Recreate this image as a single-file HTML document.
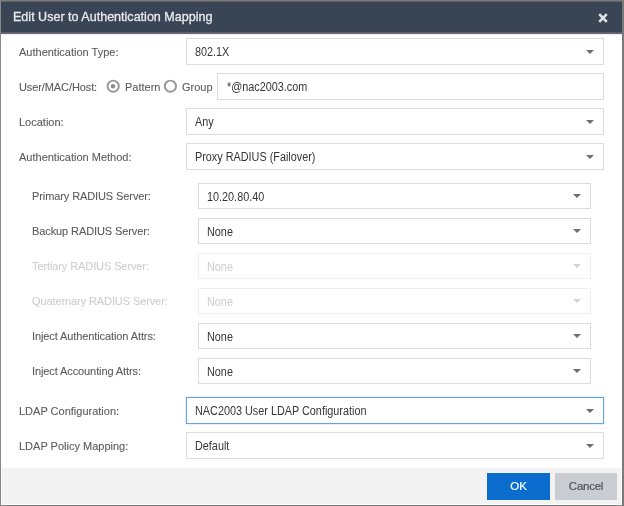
<!DOCTYPE html>
<html><head><meta charset="utf-8">
<style>
*{box-sizing:border-box;margin:0;padding:0}
html,body{width:624px;height:506px;overflow:hidden;background:#fff}
body{font-family:"Liberation Sans",sans-serif;position:relative;-webkit-font-smoothing:antialiased}
.wrap{position:absolute;left:0;top:0;width:624px;height:506px;will-change:transform}
.dlg{position:absolute;left:0;top:0;width:624px;height:506px;border-left:1px solid #888;border-top:1px solid #7a7a7a;border-right:2px solid #7a7a7a;border-bottom:1px solid #7f7f7f;background:#fff}
.hdr{position:absolute;left:0;top:0;width:621px;height:31px;background:#394555;border-bottom:0}
.hline{position:absolute;left:0;top:31px;width:621px;height:2px;background:#6b6f75}
.title{position:absolute;left:13px;top:8px;font-size:13px;transform-origin:0 0;transform:scaleX(0.965);-webkit-text-stroke:0.3px #e8eaee;color:#e8eaee;white-space:nowrap}
.close{position:absolute;left:598px;top:13px;width:10px;height:10px}
.lbl{position:absolute;font-size:11px;color:#5c5c5c;-webkit-text-stroke:0.1px #5c5c5c;white-space:nowrap}
.lbl.dis{color:#cecece;-webkit-text-stroke:0.1px #cecece}
.box{position:absolute;border:1px solid #dcdcdc;background:#fff}
.box .v{position:absolute;left:8px;top:6px;font-size:12px;transform-origin:0 0;transform:scaleX(0.903);color:#363636;white-space:nowrap}
.box.d{border-color:#efefef}
.box.d .v{color:#cdcdcd}
.box.f{border-color:#66a3e4;box-shadow:0 0 1.5px rgba(90,160,230,.55)}
.arr{position:absolute;width:0;height:0;border-left:4px solid transparent;border-right:4px solid transparent;border-top:4px solid #6e6e6e}
.box.d .arr{border-top-color:#d3d3d3}
.radio{position:absolute;width:13px;height:13px;border:2px solid #8a8a8a;border-radius:50%}
.radio.on:after{content:"";position:absolute;left:2.5px;top:2.5px;width:4px;height:4px;background:#8a8a8a;border-radius:50%}
.footer{position:absolute;left:2px;top:468px;width:619px;height:36px;background:#f3f3f3}
.btn{position:absolute;top:473px;height:27px;font-size:11.5px;text-align:center;line-height:27px}
.ok{left:487px;width:63px;background:#0a6dcd;color:#fff;-webkit-text-stroke:0.2px #fff}
.cancel{left:555px;width:62px;background:#c9ccd0;color:#4d535c;letter-spacing:-0.25px;-webkit-text-stroke:0.2px #4d535c}
</style></head><body><div class="wrap">
<div class="dlg">
</div>
<div class="hdr" style="left:1px;top:1px;height:31px;border-top:1px solid #5c616a"></div>
<div class="hline" style="left:1px;top:32px;height:1px;background:#5a606a"></div><div class="hline" style="left:1px;top:33px;height:1px;background:#69696c"></div><div class="hline" style="left:1px;top:34px;height:1px;background:#efefef"></div>
<div class="title" style="top:9.4px">Edit User to Authentication Mapping</div>
<svg class="close" viewBox="0 0 10 10"><path d="M1.2 1.2L8.8 8.8M8.8 1.2L1.2 8.8" stroke="#dfe2e6" stroke-width="2.6" stroke-linecap="butt"/></svg>

<div class="lbl" style="left:19px;top:45.5px">Authentication Type:</div>
<div class="box" style="left:186px;top:38px;width:418px;height:27px"><span class="v">802.1X</span><i class="arr" style="left:399px;top:11px"></i></div>

<div class="lbl" style="left:19px;top:80.5px;letter-spacing:-0.1px">User/MAC/Host:</div>
<svg style="position:absolute;left:104px;top:78px" width="18" height="18"><circle cx="9.2" cy="8.2" r="5.6" fill="none" stroke="#979797" stroke-width="1.9"/><circle cx="9" cy="8.2" r="2.2" fill="#8a8a8a"/></svg>
<div class="lbl" style="left:125px;top:80.5px">Pattern</div>
<svg style="position:absolute;left:162px;top:78px" width="18" height="18"><circle cx="8.4" cy="8.2" r="5.6" fill="none" stroke="#979797" stroke-width="1.9"/></svg>
<div class="lbl" style="left:182px;top:80.5px">Group</div>
<div class="box" style="left:217px;top:73px;width:387px;height:27px"><span class="v" style="left:9px">*@nac2003.com</span></div>

<div class="lbl" style="left:19px;top:115.5px">Location:</div>
<div class="box" style="left:186px;top:108px;width:418px;height:27px"><span class="v">Any</span><i class="arr" style="left:399px;top:11px"></i></div>

<div class="lbl" style="left:19px;top:150.5px">Authentication Method:</div>
<div class="box" style="left:186px;top:143px;width:418px;height:27px"><span class="v">Proxy RADIUS (Failover)</span><i class="arr" style="left:399px;top:11px"></i></div>

<div class="lbl" style="left:32px;letter-spacing:-0.1px;top:190px">Primary RADIUS Server:</div>
<div class="box" style="left:198px;top:183px;width:393px;height:26px"><span class="v">10.20.80.40</span><i class="arr" style="left:374px;top:10px"></i></div>

<div class="lbl" style="left:32px;letter-spacing:-0.1px;top:225px">Backup RADIUS Server:</div>
<div class="box" style="left:198px;top:218px;width:393px;height:26px"><span class="v">None</span><i class="arr" style="left:374px;top:10px"></i></div>

<div class="lbl dis" style="left:32px;letter-spacing:-0.1px;top:260px">Tertiary RADIUS Server:</div>
<div class="box d" style="left:198px;top:253px;width:393px;height:26px"><span class="v">None</span><i class="arr" style="left:374px;top:10px"></i></div>

<div class="lbl dis" style="left:32px;letter-spacing:-0.1px;top:295px">Quaternary RADIUS Server:</div>
<div class="box d" style="left:198px;top:288px;width:393px;height:26px"><span class="v">None</span><i class="arr" style="left:374px;top:10px"></i></div>

<div class="lbl" style="left:32px;letter-spacing:-0.1px;top:330px">Inject Authentication Attrs:</div>
<div class="box" style="left:198px;top:323px;width:393px;height:26px"><span class="v">None</span><i class="arr" style="left:374px;top:10px"></i></div>

<div class="lbl" style="left:32px;letter-spacing:-0.1px;top:365px">Inject Accounting Attrs:</div>
<div class="box" style="left:198px;top:358px;width:393px;height:26px"><span class="v">None</span><i class="arr" style="left:374px;top:10px"></i></div>

<div class="lbl" style="left:19px;top:404.5px">LDAP Configuration:</div>
<div class="box f" style="left:186px;top:397px;width:418px;height:27px"><span class="v">NAC2003 User LDAP Configuration</span><i class="arr" style="left:399px;top:11px"></i></div>

<div class="lbl" style="left:19px;top:439.5px">LDAP Policy Mapping:</div>
<div class="box" style="left:186px;top:432px;width:418px;height:27px"><span class="v">Default</span><i class="arr" style="left:399px;top:11px"></i></div>

<div class="footer"></div>
<div class="btn ok">OK</div>
<div class="btn cancel">Cancel</div>
</div></body></html>
